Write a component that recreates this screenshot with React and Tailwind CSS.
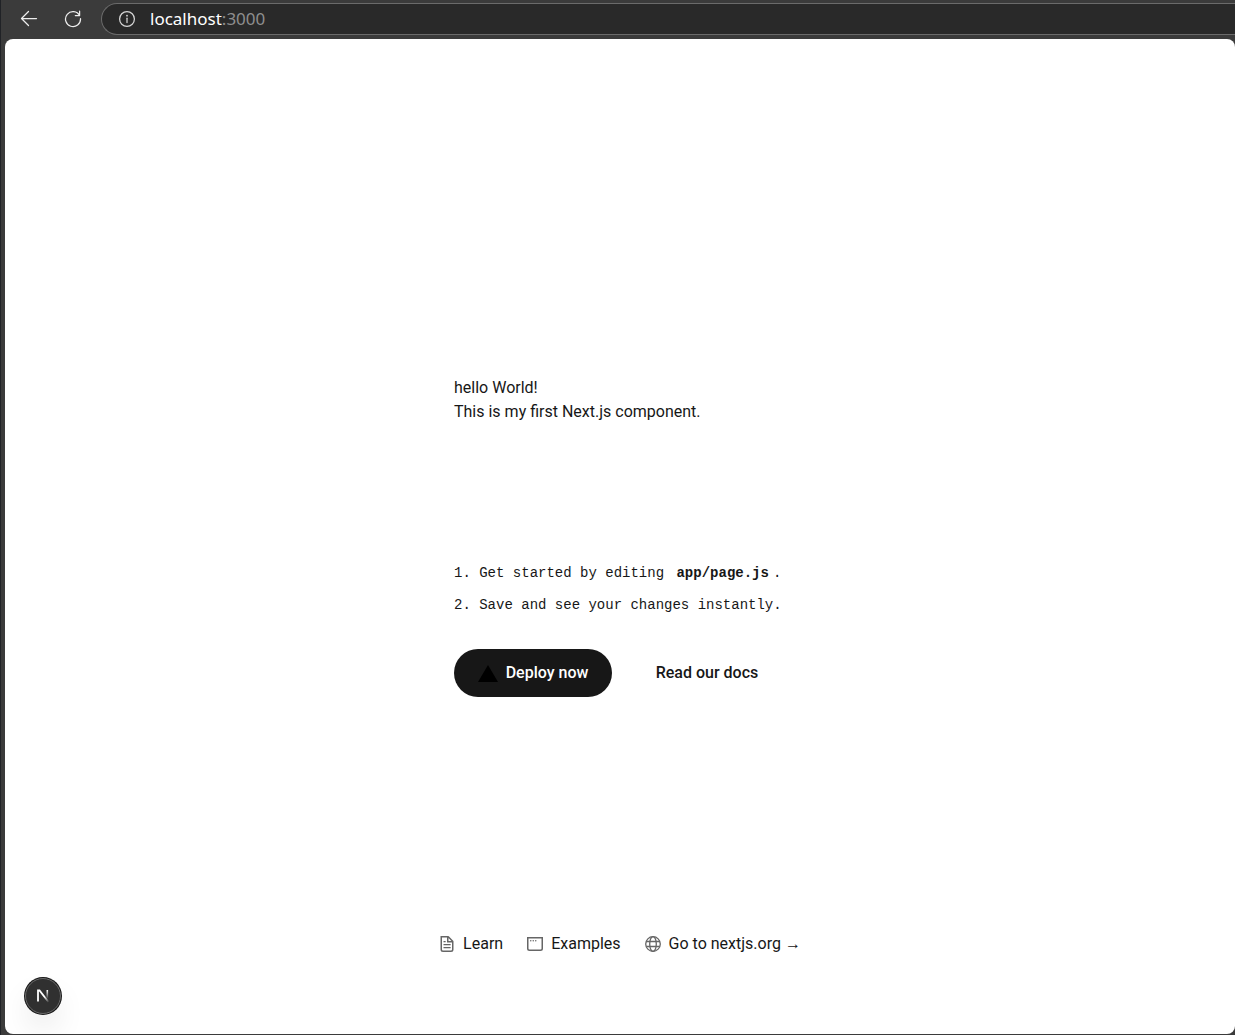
function BackIcon() {
  return (
    <svg width="18" height="18" viewBox="0 0 18 18" fill="none" stroke="#ededed" strokeWidth="1.25" strokeLinecap="round" strokeLinejoin="round" aria-hidden="true">
      <path d="M16.5 8.5H1.5M8.5 1.5l-7 7 7 7" />
    </svg>
  );
}

function ReloadIcon() {
  return (
    <svg width="18" height="18" viewBox="0 0 18 18" fill="none" stroke="#ededed" strokeWidth="1.25" strokeLinecap="round" strokeLinejoin="round" aria-hidden="true">
      <path d="M16.5 8.6A7.5 7.5 0 1 1 15.6 5.5M15.6 1.2v4.3h-4.3" />
    </svg>
  );
}

function InfoIcon() {
  return (
    <svg width="18" height="18" viewBox="0 0 18 18" fill="none" stroke="#d6d6d6" strokeWidth="1.25" strokeLinecap="round" aria-hidden="true">
      <circle cx="9" cy="9" r="7.4" />
      <path d="M9 8.2v4.3" />
      <circle cx="9" cy="5.7" r="0.9" fill="#d6d6d6" stroke="none" />
    </svg>
  );
}

function FileIcon() {
  return (
    <svg width="16" height="16" viewBox="0 0 16 16" fill="none" aria-hidden="true">
      <path fillRule="evenodd" clipRule="evenodd" fill="#666" d="M14.5 13.5V5.41a1 1 0 0 0-.3-.7L9.8.29A1 1 0 0 0 9.08 0H1.5v13.5A2.5 2.5 0 0 0 4 16h8a2.5 2.5 0 0 0 2.5-2.5m-1.5 0v-7H8v-5H3v12a1 1 0 0 0 1 1h8a1 1 0 0 0 1-1M9.5 5V2.12L12.38 5zM5.13 5h-.62v1.25h2.12V5zm-.62 3h7.12v1.25H4.5zm.62 3h-.62v1.25h7.12V11z" />
    </svg>
  );
}

function WindowIcon() {
  return (
    <svg width="16" height="16" viewBox="0 0 16 16" fill="none" aria-hidden="true">
      <path fillRule="evenodd" clipRule="evenodd" fill="#666" d="M1.5 2.5h13v10a1 1 0 0 1-1 1h-11a1 1 0 0 1-1-1zM0 1h16v11.5a2.5 2.5 0 0 1-2.5 2.5h-11A2.5 2.5 0 0 1 0 12.5zm3.75 4.5a.75.75 0 1 0 0-1.5.75.75 0 0 0 0 1.5M7 4.75a.75.75 0 1 1-1.5 0 .75.75 0 0 1 1.5 0m1.75.75a.75.75 0 1 0 0-1.5.75.75 0 0 0 0 1.5" />
    </svg>
  );
}

function GlobeIcon() {
  return (
    <svg width="16" height="16" viewBox="0 0 16 16" fill="none" stroke="#666" strokeWidth="1.3" aria-hidden="true">
      <circle cx="8" cy="8" r="7.3" />
      <ellipse cx="8" cy="8" rx="3.3" ry="7.3" />
      <path d="M1.3 5.5h13.4M1.3 10.5h13.4" />
    </svg>
  );
}

function NextMark() {
  return (
    <svg width="14" height="14" viewBox="0 0 14 14" fill="none" aria-hidden="true">
      <defs>
        <linearGradient id="diagonal" x1="8" y1="8" x2="12.5" y2="13.5" gradientUnits="userSpaceOnUse">
          <stop stopColor="#fff" />
          <stop offset="1" stopColor="#fff" stopOpacity="0" />
        </linearGradient>
        <linearGradient id="stem" x1="0" y1="1" x2="0" y2="10" gradientUnits="userSpaceOnUse">
          <stop stopColor="#fff" />
          <stop offset="1" stopColor="#fff" stopOpacity="0" />
        </linearGradient>
      </defs>
      <path d="M2 12.5V1.5h1.5l9 11.5" stroke="url(#diagonal)" strokeWidth="1.8" />
      <path d="M11.3 1v9" stroke="url(#stem)" strokeWidth="1.6" />
    </svg>
  );
}

const footerLinks = [
  { label: "Learn", href: "#learn", Icon: FileIcon },
  { label: "Examples", href: "#examples", Icon: WindowIcon },
  { label: "Go to nextjs.org", href: "#nextjs", Icon: GlobeIcon, arrow: true },
];

export default function App() {
  return (
    <div className="flex min-h-screen flex-col border-l border-[#202226] bg-[#3b3b3b] pb-px pl-1 font-['Roboto','Liberation_Sans',sans-serif] text-base leading-6 text-[#171717]">
      <header className="flex h-[39px] items-start pl-[15px] pt-[3px]">
        <div className="flex h-8 items-center gap-[26px]">
          <button type="button" aria-label="Back"><BackIcon /></button>
          <button type="button" aria-label="Reload"><ReloadIcon /></button>
        </div>
        <form className="ml-[19px] flex h-8 flex-1 items-center gap-[14px] rounded-l-full border border-r-0 border-[#6b6b6b] bg-[#292929] pl-4" onSubmit={(e) => e.preventDefault()}>
          <button type="button" aria-label="Site information"><InfoIcon /></button>
          <div role="textbox" aria-label="Address" tabIndex={0} className="font-['Noto_Sans',sans-serif] text-[17px] leading-6 text-[#8e8e8e]">
            <span className="text-white">localhost</span>:3000
          </div>
        </form>
      </header>

      <div className="relative grid flex-1 grid-rows-[20px_1fr_20px] items-center justify-items-center gap-16 rounded-lg bg-white p-20">
        <main className="row-start-2 flex flex-col">
          <div>
            <p>hello World!</p>
            <p>This is my first Next.js component.</p>
          </div>
          <ol className="mt-[137px] list-inside list-decimal font-['Liberation_Mono',monospace] text-sm leading-6">
            <li className="mb-2">
              Get started by editing{" "}
              <code className="px-1 font-['Liberation_Mono',monospace] font-semibold">app/page.js</code>.
            </li>
            <li>Save and see your changes instantly.</li>
          </ol>
          <div className="mt-8 flex gap-4 font-medium">
            <a href="#deploy" className="flex h-12 w-[158px] items-center justify-center gap-2 rounded-full bg-[#171717] text-white">
              <svg width="20" height="20" viewBox="0 0 20 20" aria-hidden="true">
                <path d="m10 2 10 17H0z" fill="#000" />
              </svg>
              Deploy now
            </a>
            <a href="#docs" className="flex h-12 w-[158px] items-center justify-center rounded-full">Read our docs</a>
          </div>
        </main>
        <footer className="row-start-3 flex items-center justify-center gap-6">
          {footerLinks.map(({ label, href, Icon, arrow }) => (
            <a key={label} href={href} className="flex items-center gap-2">
              <Icon />
              <span>{label}{arrow && <>{" "}<span className="font-['Liberation_Sans',sans-serif]">→</span></>}</span>
            </a>
          ))}
        </footer>
        <button type="button" aria-label="Open Next.js Dev Tools" className="absolute bottom-5 left-5 flex size-9 items-center justify-center rounded-full border border-[#6a6a6a] bg-[#303030] shadow-[0_0_0_1px_#171717,0_16px_32px_-8px_rgba(0,0,0,0.24)]">
          <NextMark />
        </button>
      </div>
    </div>
  );
}
